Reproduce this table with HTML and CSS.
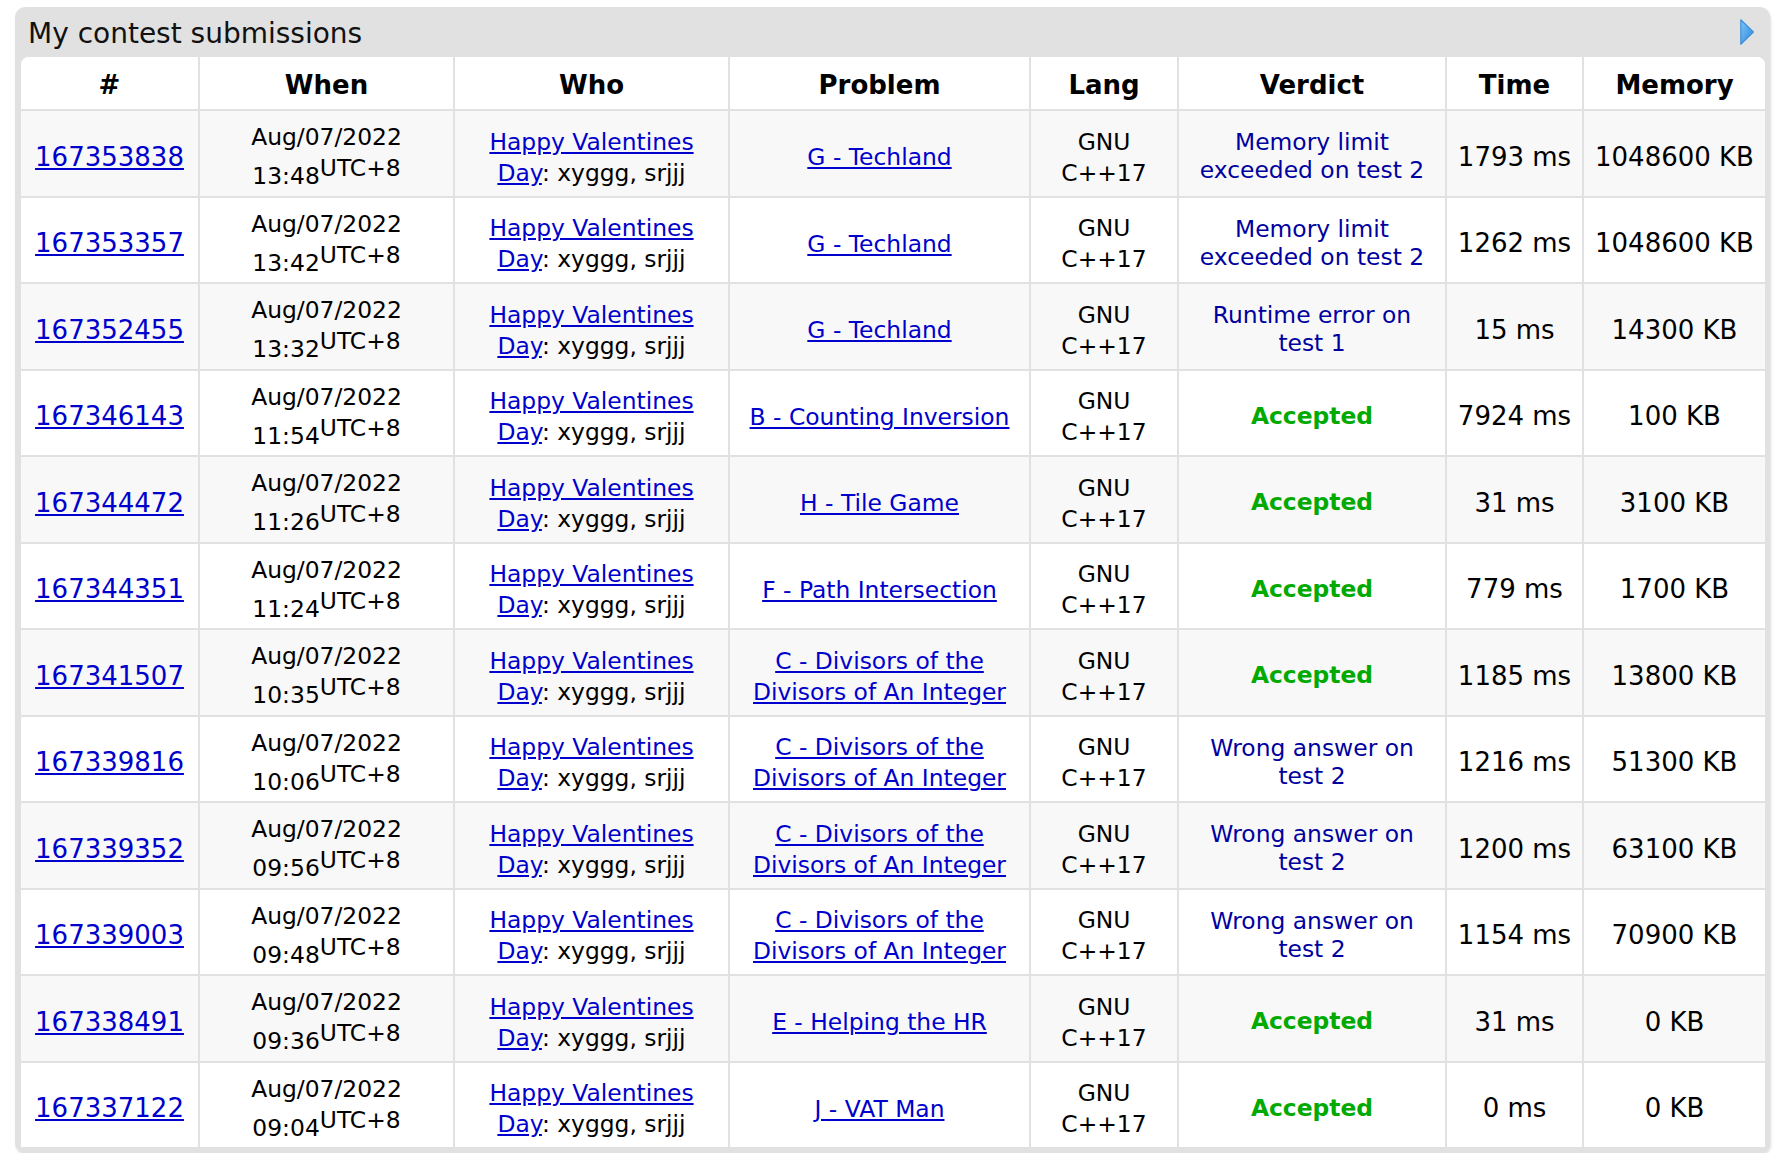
FILE: index.html
```html
<!DOCTYPE html>
<html>
<head>
<meta charset="utf-8">
<title>My contest submissions</title>
<link rel="stylesheet" href="styles.css">
</head>
<body>
<div class="roundbox">
  <div class="caption">
    <span class="title">My contest submissions</span>
    <svg class="toggle" width="14" height="26" viewBox="0 0 14 26">
      <defs>
        <linearGradient id="tg" x1="0" y1="0" x2="1" y2="1">
          <stop offset="0" stop-color="#7cc4f7"/>
          <stop offset="1" stop-color="#2d86dc"/>
        </linearGradient>
      </defs>
      <polygon points="0.8,0.8 13.4,13 0.8,25.2" fill="url(#tg)" stroke="#3f8fd8" stroke-width="1.2" stroke-linejoin="round"/>
    </svg>
  </div>
  <div class="table-wrap">
    <table class="datatable">
      <thead>
        <tr>
          <th class="c-id">#</th>
          <th class="c-when">When</th>
          <th class="c-who">Who</th>
          <th class="c-prob">Problem</th>
          <th class="c-lang">Lang</th>
          <th class="c-verdict">Verdict</th>
          <th class="c-time">Time</th>
          <th class="c-mem">Memory</th>
        </tr>
      </thead>
      <tbody>
        <tr>
          <td class="big"><a href="#">167353838</a></td>
          <td class="small">Aug/07/2022<br>13:48<sup>UTC+8</sup></td>
          <td class="small"><a href="#">Happy Valentines<br>Day</a>: xyggg, srjjj</td>
          <td class="small"><a href="#">G - Techland</a></td>
          <td class="small">GNU<br>C++17</td>
          <td class="verdict"><span class="rejected">Memory limit<br>exceeded on test 2</span></td>
          <td class="big">1793 ms</td>
          <td class="big">1048600 KB</td>
        </tr>
        <tr>
          <td class="big"><a href="#">167353357</a></td>
          <td class="small">Aug/07/2022<br>13:42<sup>UTC+8</sup></td>
          <td class="small"><a href="#">Happy Valentines<br>Day</a>: xyggg, srjjj</td>
          <td class="small"><a href="#">G - Techland</a></td>
          <td class="small">GNU<br>C++17</td>
          <td class="verdict"><span class="rejected">Memory limit<br>exceeded on test 2</span></td>
          <td class="big">1262 ms</td>
          <td class="big">1048600 KB</td>
        </tr>
        <tr>
          <td class="big"><a href="#">167352455</a></td>
          <td class="small">Aug/07/2022<br>13:32<sup>UTC+8</sup></td>
          <td class="small"><a href="#">Happy Valentines<br>Day</a>: xyggg, srjjj</td>
          <td class="small"><a href="#">G - Techland</a></td>
          <td class="small">GNU<br>C++17</td>
          <td class="verdict"><span class="rejected">Runtime error on<br>test 1</span></td>
          <td class="big">15 ms</td>
          <td class="big">14300 KB</td>
        </tr>
        <tr>
          <td class="big"><a href="#">167346143</a></td>
          <td class="small">Aug/07/2022<br>11:54<sup>UTC+8</sup></td>
          <td class="small"><a href="#">Happy Valentines<br>Day</a>: xyggg, srjjj</td>
          <td class="small"><a href="#">B - Counting Inversion</a></td>
          <td class="small">GNU<br>C++17</td>
          <td class="verdict"><span class="accepted">Accepted</span></td>
          <td class="big">7924 ms</td>
          <td class="big">100 KB</td>
        </tr>
        <tr>
          <td class="big"><a href="#">167344472</a></td>
          <td class="small">Aug/07/2022<br>11:26<sup>UTC+8</sup></td>
          <td class="small"><a href="#">Happy Valentines<br>Day</a>: xyggg, srjjj</td>
          <td class="small"><a href="#">H - Tile Game</a></td>
          <td class="small">GNU<br>C++17</td>
          <td class="verdict"><span class="accepted">Accepted</span></td>
          <td class="big">31 ms</td>
          <td class="big">3100 KB</td>
        </tr>
        <tr>
          <td class="big"><a href="#">167344351</a></td>
          <td class="small">Aug/07/2022<br>11:24<sup>UTC+8</sup></td>
          <td class="small"><a href="#">Happy Valentines<br>Day</a>: xyggg, srjjj</td>
          <td class="small"><a href="#">F - Path Intersection</a></td>
          <td class="small">GNU<br>C++17</td>
          <td class="verdict"><span class="accepted">Accepted</span></td>
          <td class="big">779 ms</td>
          <td class="big">1700 KB</td>
        </tr>
        <tr>
          <td class="big"><a href="#">167341507</a></td>
          <td class="small">Aug/07/2022<br>10:35<sup>UTC+8</sup></td>
          <td class="small"><a href="#">Happy Valentines<br>Day</a>: xyggg, srjjj</td>
          <td class="small"><a href="#">C - Divisors of the<br>Divisors of An Integer</a></td>
          <td class="small">GNU<br>C++17</td>
          <td class="verdict"><span class="accepted">Accepted</span></td>
          <td class="big">1185 ms</td>
          <td class="big">13800 KB</td>
        </tr>
        <tr>
          <td class="big"><a href="#">167339816</a></td>
          <td class="small">Aug/07/2022<br>10:06<sup>UTC+8</sup></td>
          <td class="small"><a href="#">Happy Valentines<br>Day</a>: xyggg, srjjj</td>
          <td class="small"><a href="#">C - Divisors of the<br>Divisors of An Integer</a></td>
          <td class="small">GNU<br>C++17</td>
          <td class="verdict"><span class="rejected">Wrong answer on<br>test 2</span></td>
          <td class="big">1216 ms</td>
          <td class="big">51300 KB</td>
        </tr>
        <tr>
          <td class="big"><a href="#">167339352</a></td>
          <td class="small">Aug/07/2022<br>09:56<sup>UTC+8</sup></td>
          <td class="small"><a href="#">Happy Valentines<br>Day</a>: xyggg, srjjj</td>
          <td class="small"><a href="#">C - Divisors of the<br>Divisors of An Integer</a></td>
          <td class="small">GNU<br>C++17</td>
          <td class="verdict"><span class="rejected">Wrong answer on<br>test 2</span></td>
          <td class="big">1200 ms</td>
          <td class="big">63100 KB</td>
        </tr>
        <tr>
          <td class="big"><a href="#">167339003</a></td>
          <td class="small">Aug/07/2022<br>09:48<sup>UTC+8</sup></td>
          <td class="small"><a href="#">Happy Valentines<br>Day</a>: xyggg, srjjj</td>
          <td class="small"><a href="#">C - Divisors of the<br>Divisors of An Integer</a></td>
          <td class="small">GNU<br>C++17</td>
          <td class="verdict"><span class="rejected">Wrong answer on<br>test 2</span></td>
          <td class="big">1154 ms</td>
          <td class="big">70900 KB</td>
        </tr>
        <tr>
          <td class="big"><a href="#">167338491</a></td>
          <td class="small">Aug/07/2022<br>09:36<sup>UTC+8</sup></td>
          <td class="small"><a href="#">Happy Valentines<br>Day</a>: xyggg, srjjj</td>
          <td class="small"><a href="#">E - Helping the HR</a></td>
          <td class="small">GNU<br>C++17</td>
          <td class="verdict"><span class="accepted">Accepted</span></td>
          <td class="big">31 ms</td>
          <td class="big">0 KB</td>
        </tr>
        <tr>
          <td class="big"><a href="#">167337122</a></td>
          <td class="small">Aug/07/2022<br>09:04<sup>UTC+8</sup></td>
          <td class="small"><a href="#">Happy Valentines<br>Day</a>: xyggg, srjjj</td>
          <td class="small"><a href="#">J - VAT Man</a></td>
          <td class="small">GNU<br>C++17</td>
          <td class="verdict"><span class="accepted">Accepted</span></td>
          <td class="big">0 ms</td>
          <td class="big">0 KB</td>
        </tr>
      </tbody>
    </table>
  </div>
</div>
</body>
</html>
```

FILE: styles.css
```css
html, body {
  margin: 0;
  background: #ffffff;
}

body {
  padding: 7px 14px 0 15px;
  font-family: "DejaVu Sans", Verdana, sans-serif;
  color: #000000;
}

.roundbox {
  width: 1755px;
  box-sizing: border-box;
  background: #e1e1e1;
  border-radius: 10px;
  padding: 0 5px 6px 6px;
  box-shadow: 1px 2px 3px rgba(0, 0, 0, 0.13);
}

.caption {
  height: 50px;
  box-sizing: border-box;
  padding: 3px 11px 0 7px;
  display: flex;
  align-items: center;
  justify-content: space-between;
}

.title {
  font-size: 28px;
  line-height: 33px;
  color: #111111;
}

.toggle {
  display: block;
  margin-top: -4px;
}

.table-wrap {
  background: #ffffff;
  border-radius: 8px 8px 0 0;
  overflow: hidden;
}

.datatable {
  width: 1744px;
  table-layout: fixed;
  border-collapse: separate;
  border-spacing: 0;
}

.datatable th,
.datatable td {
  text-align: center;
  vertical-align: middle;
  padding: 0 4px;
  box-sizing: border-box;
}

.datatable th + th,
.datatable td + td {
  border-left: 2px solid #e1e1e1;
}

.datatable th {
  height: 52px;
  padding-top: 4px;
  font-size: 26px;
  font-weight: bold;
  background: #ffffff;
}

.c-id { width: 177px; }
.c-when { width: 255px; }
.c-who { width: 275px; }
.c-prob { width: 301px; }
.c-lang { width: 148px; }
.c-verdict { width: 268px; }
.c-time { width: 137px; }
.c-mem { width: 183px; }

.datatable tbody td {
  border-top: 2px solid #e1e1e1;
  height: 87px;
  padding-top: 7px;
  white-space: nowrap;
}

.datatable tbody tr:nth-child(even) td {
  height: 86px;
}

.datatable tbody td.small {
  padding-top: 8px;
}

.datatable tbody td.verdict {
  padding-top: 5px;
}

.datatable tbody tr:nth-child(odd) td {
  background: #f8f8f8;
}

.datatable a {
  color: #0000cc;
  text-decoration: underline;
}

.big {
  font-size: 26px;
  line-height: 31px;
}

.small {
  font-size: 23.4px;
  line-height: 31px;
}

.small sup {
  font-size: 1em;
  vertical-align: 0.36em;
  line-height: 31px;
}

.verdict {
  font-size: 23.4px;
  line-height: 28px;
}

.rejected {
  color: #0000a0;
}

.accepted {
  color: #00aa00;
  font-weight: bold;
}
```
